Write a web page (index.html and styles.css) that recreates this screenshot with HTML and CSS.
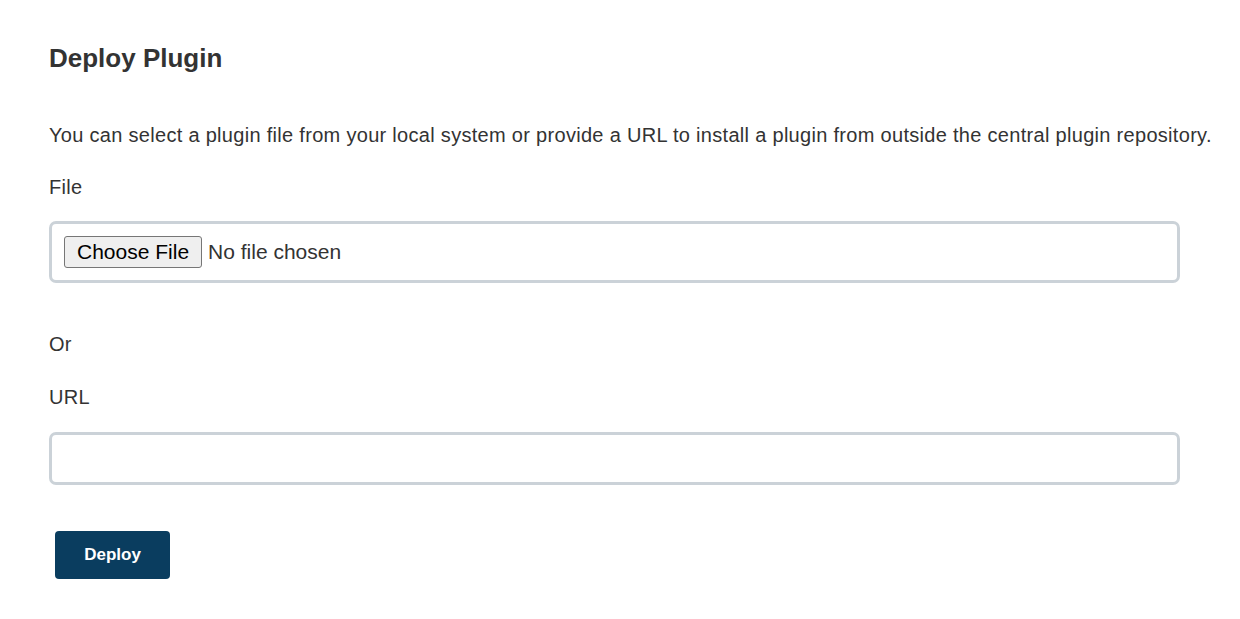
FILE: index.html
```html
<!DOCTYPE html>
<html lang="en">
<head>
    <meta charset="utf-8">
    <title>Deploy Plugin</title>
    <link rel="stylesheet" href="styles.css">
</head>
<body>
    <div id="deploy">
        <h2 class="title">Deploy Plugin</h2>
        <p class="intro">You can select a plugin file from your local system or provide a URL to install a plugin from outside the central plugin repository.</p>

        <label class="field-label" for="plugin-file">File</label>
        <div class="field file-field">
            <input type="file" id="plugin-file" name="file">
        </div>

        <p class="or">Or</p>

        <label class="field-label" for="plugin-url">URL</label>
        <input class="field url-field" type="text" id="plugin-url" name="url">

        <button class="deploy-btn" type="submit">Deploy</button>
    </div>
</body>
</html>
```

FILE: styles.css
```css
body {
    margin: 0;
    padding: 0;
    background-color: #fff;
    color: #333;
    font-family: "Liberation Sans", Arial, sans-serif;
}

#deploy {
    display: flex;
    flex-direction: column;
    align-items: flex-start;
    padding: 43px 0 0 49px;
}

.title {
    margin: 0;
    font-size: 26px;
    line-height: 30px;
    font-weight: bold;
}

.intro {
    margin: 49px 0 0 0;
    font-size: 20px;
    line-height: 26px;
    letter-spacing: 0.3px;
}

.field-label {
    display: block;
    margin-top: 26px;
    font-size: 20px;
    line-height: 26px;
    letter-spacing: 0.3px;
}

.field {
    box-sizing: border-box;
    width: 1131px;
    margin-top: 21px;
    border: 3px solid #cbd2d8;
    border-radius: 7px;
    background-color: #fff;
}

.file-field {
    height: 62px;
    padding: 12px;
}

.file-field input {
    font-family: "Liberation Sans", Arial, sans-serif;
    font-size: 21px;
    color: #333;
}

.file-field input::file-selector-button {
    height: 32px;
    margin-right: 6px;
    padding: 0 12px;
    font-family: "Liberation Sans", Arial, sans-serif;
    font-size: 21px;
    color: #000;
    background-color: #efefef;
    border: 1px solid #767676;
    border-radius: 3px;
}

.or {
    margin: 48px 0 0 0;
    font-size: 20px;
    line-height: 26px;
    letter-spacing: 0.3px;
}

.or + .field-label {
    margin-top: 27px;
}

.url-field {
    display: block;
    height: 53px;
    margin-top: 22px;
    padding: 0 12px;
    font-size: 18px;
    outline: none;
}

.deploy-btn {
    width: 115px;
    height: 48px;
    margin: 46px 0 0 6px;
    font-family: "Liberation Sans", Arial, sans-serif;
    font-size: 17px;
    font-weight: bold;
    color: #fff;
    background-color: #0a3d5f;
    border: none;
    border-radius: 4px;
    cursor: pointer;
}
```
